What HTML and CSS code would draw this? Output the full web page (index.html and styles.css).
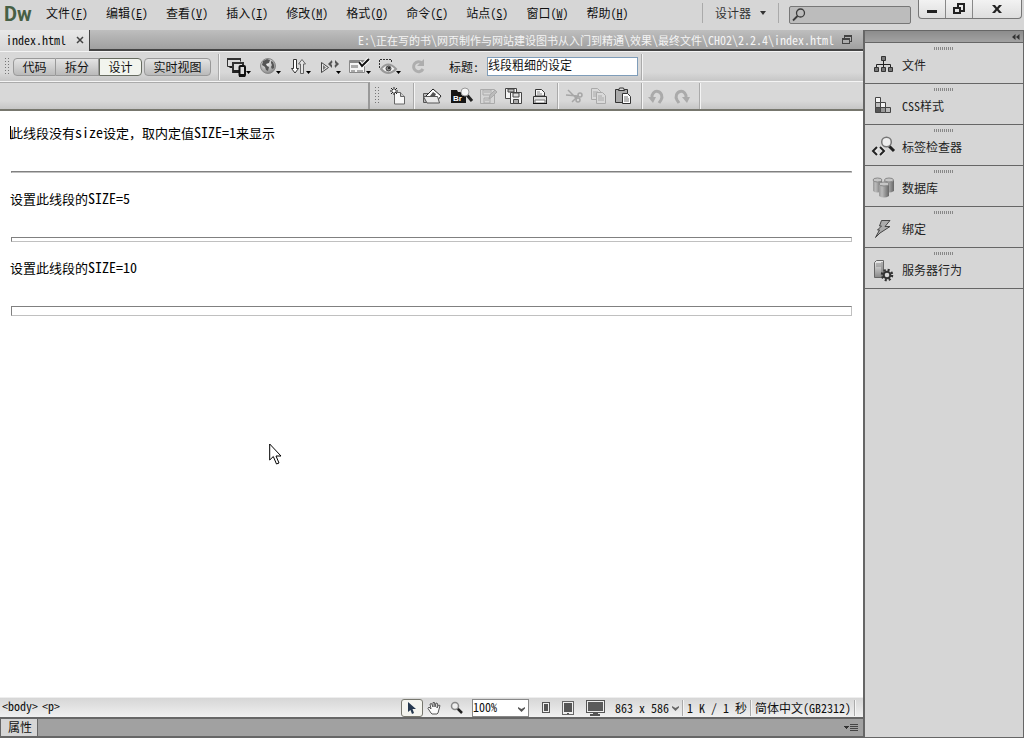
FILE: index.html
```html
<!DOCTYPE html>
<html lang="zh-CN">
<head>
<meta charset="utf-8">
<title>index.html</title>
<link rel="stylesheet" href="styles.css">
</head>
<body>
<header class="menubar">
  <span class="logo">Dw</span>
  <nav class="menus">
    <button>文件(<u>F</u>)</button>
    <button>编辑(<u>E</u>)</button>
    <button>查看(<u>V</u>)</button>
    <button>插入(<u>I</u>)</button>
    <button>修改(<u>M</u>)</button>
    <button>格式(<u>O</u>)</button>
    <button>命令(<u>C</u>)</button>
    <button>站点(<u>S</u>)</button>
    <button>窗口(<u>W</u>)</button>
    <button>帮助(<u>H</u>)</button>
  </nav>
  <button class="workspace">设计器
    <svg width="6" height="4" viewBox="0 0 6 4"><path d="M0 0h6L3 4z" fill="#333"/></svg>
  </button>
  <label class="search">
    <svg width="14" height="14" viewBox="0 0 14 14" fill="none" stroke="#3c3c3c"><circle cx="8.500" cy="5" r="4" stroke-width="1.300"/><path d="M5.500 8L1 12.500" stroke-width="1.800"/></svg>
    <input type="search" aria-label="搜索">
  </label>
  <div class="winbuttons">
    <button aria-label="最小化"><svg width="12" height="12" viewBox="0 0 12 12"><path d="M1 7h10v3H1z" fill="#222"/></svg></button>
    <button aria-label="还原"><svg width="12" height="12" viewBox="0 0 12 12" fill="none" stroke="#222" stroke-width="2"><path d="M5 4V1h6v7H8"/><path d="M1 5h6v5H1z"/></svg></button>
    <button class="close" aria-label="关闭"><svg width="12" height="12" viewBox="0 0 12 12"><path d="M1 2h3l2 2.500L8 2h3L7.500 6 11 10H8L6 7.500 4 10H1l3.500-4z" fill="#222"/></svg></button>
  </div>
</header>

<div class="workarea">
  <main class="document">
    <div class="tabs">
      <button class="tab">index.html
        <svg width="8" height="8" viewBox="0 0 8 8"><path d="M1 1l6 6M7 1L1 7" stroke="#444" stroke-width="1.500"/></svg>
      </button>
      <span class="path">E:\<span class="dir">正在写的书</span>\<span class="dir">网页制作与网站建设图书从入门到精通</span>\<span class="dir">效果</span>\<span class="dir">最终文件</span>\CH02\2.2.4\index.html</span>
      <button class="restore" aria-label="还原文档"><svg width="10" height="10" viewBox="0 0 10 10" shape-rendering="crispEdges"><path d="M2 0h8v7H8V6h1V2H3v1H2z" fill="#444"/><path d="M0 3h8v6H0zM1 5v3h6V5z" fill="#444" fill-rule="evenodd"/></svg></button>
    </div>

    <div class="docbar">
      <span class="grip"></span>
      <div class="views">
        <button>代码</button><button>拆分</button><button class="on">设计</button>
      </div>
      <button class="live">实时视图</button>
      <span class="sep"></span>
      <div class="tools">
        <button aria-label="多屏幕"><svg width="30" height="24" viewBox="0 0 30 24">
          <path d="M.5 3.500h13v3M.5 3.500v8h5" fill="#ddd" stroke="#333"/><path d="M0 3h14v2H0z" fill="#333"/><path d="M1 11h5v2H3z" fill="#222"/>
          <path d="M6 8h10v9H6z" fill="#ddd" stroke="#333" stroke-width="2"/><path d="M6 15h6v3H6z" fill="#222"/>
          <rect x="12.500" y="11" width="5.500" height="10" rx="1" fill="#ddd" stroke="#111" stroke-width="2"/><path d="M12 19h6v3h-6z" fill="#111"/>
          <path d="M19 16h5l-2.500 3z"/></svg></button>
        <button aria-label="预览"><svg width="30" height="24" viewBox="0 0 30 24">
          <defs><radialGradient id="globe" cx=".4" cy=".3" r=".8"><stop offset="0" stop-color="#fff"/><stop offset="1" stop-color="#777"/></radialGradient></defs>
          <circle cx="11" cy="11" r="7.500" fill="url(#globe)" stroke="#888"/><path d="M6 6l4-2 3 1-1 3-3 1 1 2 2 1-1 4-2-1-1-3-3-2zM14 6l2 1 1 3v3l-2 1-1-2 1-2-1-2z" fill="#555"/>
          <path d="M19 16h5l-2.500 3z"/></svg></button>
        <button aria-label="文件管理"><svg width="30" height="24" viewBox="0 0 30 24" fill="#fff" stroke="#333">
          <path d="M6.500 4.500h3v9h2L8 18l-3.500-4.500h2z"/><path d="M13.500 18.500h3V9h2L15 4.500 11.500 9h2z" fill="#e4e4e4" stroke="#666"/>
          <path d="M19 16h5l-2.500 3z" fill="#000" stroke="none"/></svg></button>
        <button aria-label="验证"><svg width="30" height="24" viewBox="0 0 30 24">
          <path d="M4.500 7.500v10l7-5z" fill="#e8e8e8" stroke="#444"/><path d="M6 10v5l3-2.500z" fill="#777"/>
          <path d="M15 5l-4 4 4 4v-3l-1-1 1-1zM18 5l4 4-4 4v-3l1-1-1-1z" fill="#555"/><path d="M15 7h1M17 11h1" stroke="#999"/><path d="M19 16h5l-2.500 3z"/></svg></button>
        <button aria-label="检查兼容"><svg width="30" height="24" viewBox="0 0 30 24">
          <path d="M2.500 5.500h15v12h-15z" fill="#f4f4f4" stroke="#888"/><path d="M3 6h14v2H3z" fill="#888"/><path d="M4 10h7v3H4zM4 15h4v2H4zM10 15h6v2h-6z" fill="#aaa"/>
          <path d="M12 7l3 4 7-7" fill="none" stroke="#fff" stroke-width="4"/><path d="M12 7l3 4 7-7" fill="none" stroke="#111" stroke-width="2"/><path d="M19 16h5l-2.500 3z"/></svg></button>
        <button aria-label="可视化助理"><svg width="30" height="24" viewBox="0 0 30 24">
          <path d="M2.500 13V4.500h12V8" fill="none" stroke="#333" stroke-dasharray="2 1"/><path d="M4 14q7-9 15 0-8 8-15 0z" fill="#f2f2f2" stroke="#999" stroke-width="2"/>
          <circle cx="11.500" cy="13.500" r="2.500" fill="#888" stroke="#444"/><circle cx="12" cy="13" r="1" fill="#111"/><path d="M19 16h5l-2.500 3z"/></svg></button>
        <button aria-label="刷新"><svg width="30" height="24" viewBox="0 0 30 24">
          <path d="M15 8A5 5 0 1 0 16 14" fill="none" stroke="#aeaeae" stroke-width="3"/><path d="M17 4v7h-7z" fill="#aeaeae"/></svg></button>
      </div>
      <label class="title-field">标题: <input type="text" value="线段粗细的设定"></label>
      <span class="sep"></span>
    </div>

    <div class="stdbar">
      <span class="blank"></span>
      <span class="grip"></span>
      <div class="set">
        <button aria-label="新建"><svg width="26" height="24" viewBox="0 0 26 24">
          <path d="M9.500 8.500h6l4 4v7.500h-10z" fill="#f6f6f6" stroke="#666"/><path d="M15.500 8.500v4h4" fill="#ccc" stroke="#666"/><path d="M9 3v8M5 7h8M6 4l6 6M12 4l-6 6" stroke="#222"/><circle cx="9" cy="7" r="1.500" fill="#fff"/></svg></button>
      </div>
      <span class="sep"></span>
      <div class="set files">
        <button aria-label="打开"><svg width="26" height="24" viewBox="0 0 26 24">
          <path d="M4.500 18.500v-9h5l2-2h5v11z" fill="#bbb" stroke="#555"/><path d="M6 13l8-8 8 7-4 5z" fill="#fff" stroke="#222"/><path d="M14 8l3 2-2 4-4-2z" fill="#555"/><path d="M4.500 12.500h14l2 6.500H8z" fill="#e8e8e8" stroke="#555"/></svg></button>
        <button aria-label="在 Bridge 中浏览"><svg width="26" height="24" viewBox="0 0 26 24">
          <path d="M5 6h6l1 2h8v11H5z" fill="#151515"/><text x="7" y="17" class="br">Br</text><path d="M21 11l5 6" stroke="#222" stroke-width="3"/><circle cx="19" cy="8" r="4" fill="#f6f6f6" stroke="#999"/></svg></button>
        <button aria-label="保存"><svg width="26" height="24" viewBox="0 0 26 24" fill="#d6d6d6" stroke="#aaa">
          <path d="M7.500 5.500h14v14h-14z"/><path d="M10 6h8v5h-8zM11 14h6v5h-6z"/><path d="M11 8h6M12 16h4"/><path d="M16 15l1-4 5-5 2 2-5 5z" fill="#bbb"/></svg></button>
        <button aria-label="全部保存"><svg width="26" height="24" viewBox="0 0 26 24" fill="#f4f4f4" stroke="#444">
          <path d="M5.500 4.500h11v10h-11z"/><path d="M8 5h6v3H8z" fill="#bbb"/><path d="M10.500 8.500h11v11h-11z"/><path d="M13 9h6v4h-6z" fill="#ddd"/><path d="M13.500 15.500h5v4h-5z" fill="#aaa"/></svg></button>
        <button aria-label="打印"><svg width="26" height="24" viewBox="0 0 26 24" fill="#f8f8f8" stroke="#333">
          <path d="M8.500 12V5.500h6l3 3V12z"/><path d="M10 8h3M10 10h5" stroke="#888"/><path d="M6.500 12.500h13v7h-13z" fill="#ddd"/><path d="M8 16h10v3H8z" fill="#fff" stroke="#777"/><path d="M6 19.500h14" stroke="#111"/></svg></button>
      </div>
      <span class="sep"></span>
      <div class="set">
        <button aria-label="剪切"><svg width="26" height="24" viewBox="0 0 26 24" fill="none" stroke="#a6a6a6" stroke-width="1.500">
          <path d="M7 6l8 8M11 18l5-5 2-1M5 11l12 1"/><circle cx="19" cy="11" r="2"/><circle cx="17" cy="16" r="2"/></svg></button>
        <button aria-label="复制"><svg width="26" height="24" viewBox="0 0 26 24" fill="#d9d9d9" stroke="#aaa">
          <path d="M4.500 4.500h6l3 3v8h-9z"/><path d="M6 8h5M6 10h5M6 12h4"/><path d="M9.500 8.500h6l3 3v8h-9z"/><path d="M11 12h4M11 14h6M11 16h6"/></svg></button>
        <button aria-label="粘贴"><svg width="26" height="24" viewBox="0 0 26 24" stroke="#333">
          <path d="M2.500 5.500h12v13h-12z" fill="#aaa"/><path d="M5.500 6.500l1-2.500h4l1 2.500z" fill="#ddd"/><path d="M9.500 9.500h5l3 3v7h-8z" fill="#fff"/><path d="M11 13h4M11 15h5M11 17h5" stroke="#777"/></svg></button>
      </div>
      <span class="sep"></span>
      <div class="set">
        <button aria-label="撤消"><svg width="26" height="24" viewBox="0 0 26 24">
          <path d="M7 14a5 5.500 0 1 1 9 2l-2 3" fill="none" stroke="#aaa" stroke-width="3"/><path d="M3 13h8l-3 6z" fill="#aaa"/></svg></button>
        <button aria-label="重做"><svg width="26" height="24" viewBox="0 0 26 24">
          <path d="M15 14a5 5.500 0 1 0-9 2l2 3" fill="none" stroke="#aaa" stroke-width="3"/><path d="M11 13h8l-3 6z" fill="#aaa"/></svg></button>
      </div>
      <span class="sep"></span>
    </div>

    <section class="canvas">
      <p class="caret">此线段没有<span class="latin">size</span>设定，取内定值<span class="latin">SIZE=1</span>来显示</p>
      <hr class="size1">
      <p>设置此线段的<span class="latin">SIZE=5</span></p>
      <hr class="size5">
      <p>设置此线段的<span class="latin">SIZE=10</span></p>
      <hr class="size10">
      <svg class="pointer" width="13" height="22" viewBox="0 0 13 22"><path d="M.7 1v16l3.600-3.500L7.500 21l2.500-1-3-7h5z" fill="#fff" stroke="#000"/></svg>
    </section>

    <footer class="status">
      <div class="tags"><button>&lt;body&gt;</button><button>&lt;p&gt;</button></div>
      <button class="select-tool" aria-label="选取工具"><svg width="10" height="14" viewBox="0 0 10 14"><path d="M1 1v10l2.500-2L5 13l2-1-1.500-4H9z" fill="#26384e"/></svg></button>
      <button class="hand" aria-label="手形工具"><svg width="14" height="14" viewBox="0 0 14 14"><path d="M4 12L1 7.500 2 6l2 2-1-5 1.500-.5L6 6V1.500h1.500L8 6l1-4 1.500.5L10 7l1.500-3 1.500.5L11 12l-1 1H5z" fill="#fafafa" stroke="#555"/></svg></button>
      <button class="lens" aria-label="缩放工具"><svg width="13" height="13" viewBox="0 0 13 13"><path d="M7 7l5 5" stroke="#222" stroke-width="2.500"/><circle cx="5" cy="5" r="3.500" fill="#eee" stroke="#888" stroke-width="1.500"/></svg></button>
      <span class="zoom">
        <select aria-label="缩放比率"><option>100%</option></select>
        <svg width="7" height="6" viewBox="0 0 7 6"><path d="M0 1l3.500 2L7 1v1.500L3.500 6 0 2.500z" fill="#555"/></svg>
      </span>
      <button class="phone" aria-label="手机大小"><svg width="8" height="11" viewBox="0 0 8 11" shape-rendering="crispEdges"><path d="M0 0h8v11H0z" fill="#555"/><path d="M1 1h6v9H1z" fill="#eee"/><path d="M2 2h4v7H2z" fill="#555"/></svg></button>
      <button class="tablet" aria-label="平板电脑大小"><svg width="12" height="14" viewBox="0 0 12 14" shape-rendering="crispEdges"><path d="M0 0h12v14H0z" fill="#666"/><path d="M1 1h10v12H1z" fill="#eee"/><path d="M2 2h8v9H2zM5 12h2v1H5z" fill="#555"/></svg></button>
      <button class="desktop" aria-label="桌面电脑大小"><svg width="19" height="16" viewBox="0 0 19 16" shape-rendering="crispEdges"><path d="M0 0h19v13H0zM7 13h5v1h2v2H4v-2h3z" fill="#555"/><path d="M1 1h17v11H1z" fill="#eee"/><path d="M2 2h15v9H2z" fill="#5a5a5a"/></svg></button>
      <button class="dims">863 x 586<svg width="7" height="6" viewBox="0 0 7 6"><path d="M0 1l3.500 2L7 1v1.500L3.500 6 0 2.500z" fill="#666"/></svg></button>
      <span class="sep"></span>
      <span class="size">1 K / 1 秒</span>
      <span class="sep"></span>
      <span class="charset">简体中文(GB2312)</span>
      <span class="sep"></span>
    </footer>

    <div class="properties">
      <button class="ptab">属性</button>
      <button class="pmenu" aria-label="面板菜单"><svg width="14" height="7" viewBox="0 0 14 7" shape-rendering="crispEdges"><path d="M0 2h5L2.500 5z" fill="#333"/><path d="M6 0h8v1H6zM6 2h8v1H6zM6 4h8v1H6zM6 6h8v1H6z" fill="#444"/></svg></button>
    </div>
  </main>

  <aside class="panels">
    <button class="collapse" aria-label="折叠面板"><svg width="8" height="6" viewBox="0 0 8 6"><path d="M0 3l3.500-3v6zM4 3l3.500-3v6z" fill="#333"/></svg></button>
    <button class="panel"><svg width="24" height="24" viewBox="0 0 24 24"><path d="M11.500 7v8M4.500 15v-3.500h14V15" fill="none" stroke="#222"/><path d="M9.500 3.500h4v4h-4zM2.500 14.500h4v4h-4zM9.500 14.500h4v4h-4zM16.500 14.500h4v4h-4z" fill="#777" stroke="#333"/></svg>文件</button>
    <button class="panel"><svg width="24" height="24" viewBox="0 0 24 24" stroke="#444"><path d="M3.500 3.500h5v5h-5zM8.500 8.500h5v5h-5z" fill="#f4f4f4"/><path d="M3.500 8.500h5v5h-5zM13.500 13.500h5v5h-5z" fill="#bbb"/><path d="M3.500 13.500h5v5h-5z" fill="#555"/><path d="M8.500 13.500h5v5h-5z" fill="#999"/></svg>CSS样式</button>
    <button class="panel"><svg width="24" height="24" viewBox="0 0 24 24"><path d="M17 11l5 5" stroke="#222" stroke-width="3"/><circle cx="14.500" cy="7" r="4.800" fill="#eee" stroke="#777" stroke-width="1.500"/><path d="M6 12l-4 4 4 4M8 12l4 4-4 4" fill="none" stroke="#e6e6e6" stroke-width="4"/><path d="M5 12l-4 4 4 4M8 12l4 4-4 4" fill="none" stroke="#222" stroke-width="2"/></svg>标签检查器</button>
    <button class="panel"><svg width="24" height="24" viewBox="0 0 24 24">
      <defs><linearGradient id="drum"><stop offset="0" stop-color="#999"/><stop offset=".3" stop-color="#bbb"/><stop offset="1" stop-color="#666"/></linearGradient></defs>
      <g fill="url(#drum)"><path d="M1 4v11q4 3 9 0V4z"/><path d="M12 4v11q5 3 10 0V4z"/><path d="M7 8v12q5 3 10 0V8z"/></g><g fill="#c6c6c6" stroke="#888"><ellipse cx="5.500" cy="4" rx="4.500" ry="2"/><ellipse cx="17" cy="4" rx="4.500" ry="2"/><ellipse cx="12" cy="8" rx="5" ry="2"/></g></svg>数据库</button>
    <button class="panel"><svg width="24" height="24" viewBox="0 0 24 24"><path d="M9.500 3.500h8.500l-5 6h5L8 16l-4.500 4.500L7.500 13h-2l4-4h-2z" fill="#aaa" stroke="#444"/></svg>绑定</button>
    <button class="panel"><svg width="24" height="24" viewBox="0 0 24 24"><defs><linearGradient id="tower" x2="0" y2="1"><stop offset="0" stop-color="#eee"/><stop offset="1" stop-color="#888"/></linearGradient></defs><path d="M2.500 4.500l2-2h7v16l-2 1h-7z" fill="url(#tower)" stroke="#666"/><path d="M10 4v14" stroke="#777"/><path d="M4 6h5M4 8h5" stroke="#888"/><circle cx="15" cy="17" r="5" fill="none" stroke="#333" stroke-width="2.500" stroke-dasharray="2 1.930"/><circle cx="15" cy="17" r="3.300" fill="#d8d8d8" stroke="#333" stroke-width="2"/></svg>服务器行为</button>
  </aside>
</div>
</body>
</html>
```
FILE: styles.css
```css
* { box-sizing: border-box; }

body {
  margin: 0;
  min-height: 100vh;
  display: flex;
  flex-direction: column;
  background: #d6d6d6;
  color: #111;
  font: 12px/14px "Noto Sans Mono CJK SC", "Noto Sans CJK SC", monospace;
}

button, input, select {
  margin: 0;
  padding: 0;
  border: 0;
  background: none;
  color: inherit;
  font: inherit;
}

button { white-space: nowrap; flex: none; }
svg { display: block; flex: none; overflow: visible; }

.menubar { display: flex; height: 30px; align-items: flex-start; }
.logo {
  width: 46px;
  padding-left: 4px;
  font: bold 20px/28px Roboto, sans-serif;
  color: #465f45;
}
.menus { display: flex; gap: 18px; padding-top: 6px; margin-right: auto; }
.workspace {
  display: flex;
  align-items: center;
  gap: 9px;
  height: 20px;
  margin: 3px 10px 0 0;
  padding: 0 12px;
  border: solid #aaa;
  border-width: 0 1px;
  color: #333;
}
.search {
  display: flex;
  width: 122px;
  height: 18px;
  margin: 6px 7px 0 0;
  padding: 1px 2px;
  background: #bcbcbc;
  border: 1px solid #777;
  border-radius: 2px;
}
.search input { flex: 1; min-width: 0; outline: 0; }
.winbuttons {
  display: flex;
  height: 19px;
  margin-right: 2px;
  background: linear-gradient(#f2f2f2, #dedede);
  border: 1px solid #777;
  border-top: 0;
  border-radius: 0 0 4px 4px;
}
.winbuttons button { display: grid; place-items: center; width: 27px; border-right: 1px solid #888; }
.winbuttons .close { width: 48px; border: 0; }

.workarea { display: flex; flex: 1; }
.document { display: flex; flex-direction: column; flex: 1; min-width: 0; }

.tabs {
  display: flex;
  align-items: center;
  height: 21px;
  background: linear-gradient(#bebebe, #a0a0a0);
  border-bottom: 2px solid #444;
}
.tab {
  display: flex;
  align-items: center;
  gap: 10px;
  height: 21px;
  margin-bottom: -2px;
  padding: 0 5px 2px 6px;
  background: linear-gradient(#e8e8e8, #d6d6d6);
  border-right: 1px solid #444;
}
.path { margin-left: auto; color: #f4f4f4; white-space: nowrap; }
.dir { font-size: 11px; }
.restore { margin: 0 11px 0 8px; }

.docbar, .stdbar {
  display: flex;
  align-items: center;
  height: 30px;
  background: linear-gradient(#d8d8d8 70%, #c6c6c6);
  border-top: 1px solid #f4f4f4;
}
.stdbar { border-bottom: 2px solid #77776e; }
.grip {
  width: 5px;
  height: 19px;
  margin: 0 4px;
  background: repeating-conic-gradient(#888 0 25%, transparent 0 50%) 0 0 / 4px 4px;
  background: radial-gradient(circle, #777 1px, transparent 1px) 0 0 / 3px 3px;
}
.sep { width: 2px; height: 26px; background: #f4f4f4; border-left: 1px solid #aaa; }
.views { display: flex; }
.views button, .live {
  width: 43px;
  height: 18px;
  background: linear-gradient(#e4e4e4, #bababa);
  border: 1px solid #999;
  line-height: 16px;
}
.views button + button { border-left: 0; }
.views button:first-child { border-radius: 4px 0 0 4px; }
.views .on { background: #f2f4ee; border: 1px solid #666b60; border-radius: 0 4px 4px 0; }
.live { width: 67px; margin: 0 7px 0 2px; border-radius: 4px; }
.tools { display: flex; margin-left: 7px; }
.title-field { display: flex; align-items: center; gap: 8px; margin: 0 3px 0 12px; white-space: nowrap; }
.title-field input {
  width: 151px;
  height: 19px;
  padding-bottom: 4px;
  background: #fff;
  border: 1px solid #7f9db9;
}

.blank { width: 370px; align-self: stretch; border-right: 2px solid #999; border-top: 1px solid #aaa; }
.stdbar .grip { margin: 0 4px; }
.set { display: flex; margin: 0 2px; }
.files { gap: 1px; margin: 0 4px; }
.br { font: bold 8px "Liberation Sans", sans-serif; fill: #fff; }

.canvas {
  position: relative;
  flex: 1;
  padding: 13px 11px 0 10px;
  background: #fff;
  color: #000;
  font-size: 13px;
  line-height: 16px;
}
.canvas p { height: 16px; margin: 0; }
.latin { font-size: 14px; }
.caret { position: relative; }
.caret::before { content: ""; position: absolute; left: 0; top: 2px; width: 1px; height: 13px; background: #000; }
.canvas hr { margin: 31px 0 17px 1px; border: 1px solid; border-color: #808080 #c0c0c0 #c0c0c0 #808080; }
.size1 { height: 2px; }
.size5 { height: 5px; }
.size10 { height: 10px; }
.pointer { position: absolute; left: 269px; top: 332px; }

.status {
  display: flex;
  align-items: center;
  height: 20px;
  background: linear-gradient(#d6d6d6, #f0f0f0);
  border-top: 1px solid #eee;
}
.status .sep { height: 16px; }
.tags { display: flex; align-self: flex-start; gap: 4px; margin: 1px auto 0 2px; }
.select-tool {
  display: grid;
  place-items: center;
  width: 22px;
  height: 18px;
  background: #f4f4ee;
  border: 1px solid #77776e;
  border-radius: 3px;
}
.hand { margin-left: 4px; }
.lens { margin: 0 9px; }
.zoom { position: relative; width: 57px; height: 18px; }
.zoom select {
  width: 100%;
  height: 100%;
  padding-bottom: 3px;
  appearance: none;
  background: #fff;
  border: 1px solid #888;
  line-height: 13px;
}
.zoom svg { position: absolute; right: 4px; top: 7px; pointer-events: none; }
.phone { margin: 0 12px 0 13px; }
.desktop { margin: 0 10px 0 12px; }
.dims { display: flex; align-items: center; gap: 3px; margin-right: 3px; }
.size { margin: 0 3px; white-space: nowrap; }
.charset { margin: 0 3px; white-space: nowrap; }
.status .sep:last-child { margin-right: 7px; }

.properties {
  display: flex;
  align-items: center;
  height: 21px;
  background: #a1a1a1;
  border: solid #666;
  border-width: 2px 0 2px 1px;
}
.ptab { align-self: stretch; padding: 0 5px 2px 7px; background: #d6d6d6; border-right: 1px solid #666; }
.pmenu { margin: 0 5px 0 auto; }

.panels {
  display: flex;
  flex-direction: column;
  width: 161px;
  border: solid #666;
  border-width: 1px 1px 1px 2px;
}
.collapse {
  display: flex;
  align-items: center;
  justify-content: flex-end;
  height: 12px;
  padding-right: 3px;
  background: linear-gradient(#8c8c8c, #a2a2a2);
  border-bottom: 1px solid #666;
}
.panel {
  position: relative;
  display: flex;
  align-items: center;
  gap: 6px;
  height: 41px;
  padding: 4px 0 0 7px;
  border-bottom: 1px solid #666;
  color: #222;
}
.panel::before {
  content: "";
  position: absolute;
  left: 69px;
  top: 4px;
  width: 19px;
  height: 3px;
  background: repeating-linear-gradient(90deg, #888 0 1px, transparent 1px 2px);
}
```
